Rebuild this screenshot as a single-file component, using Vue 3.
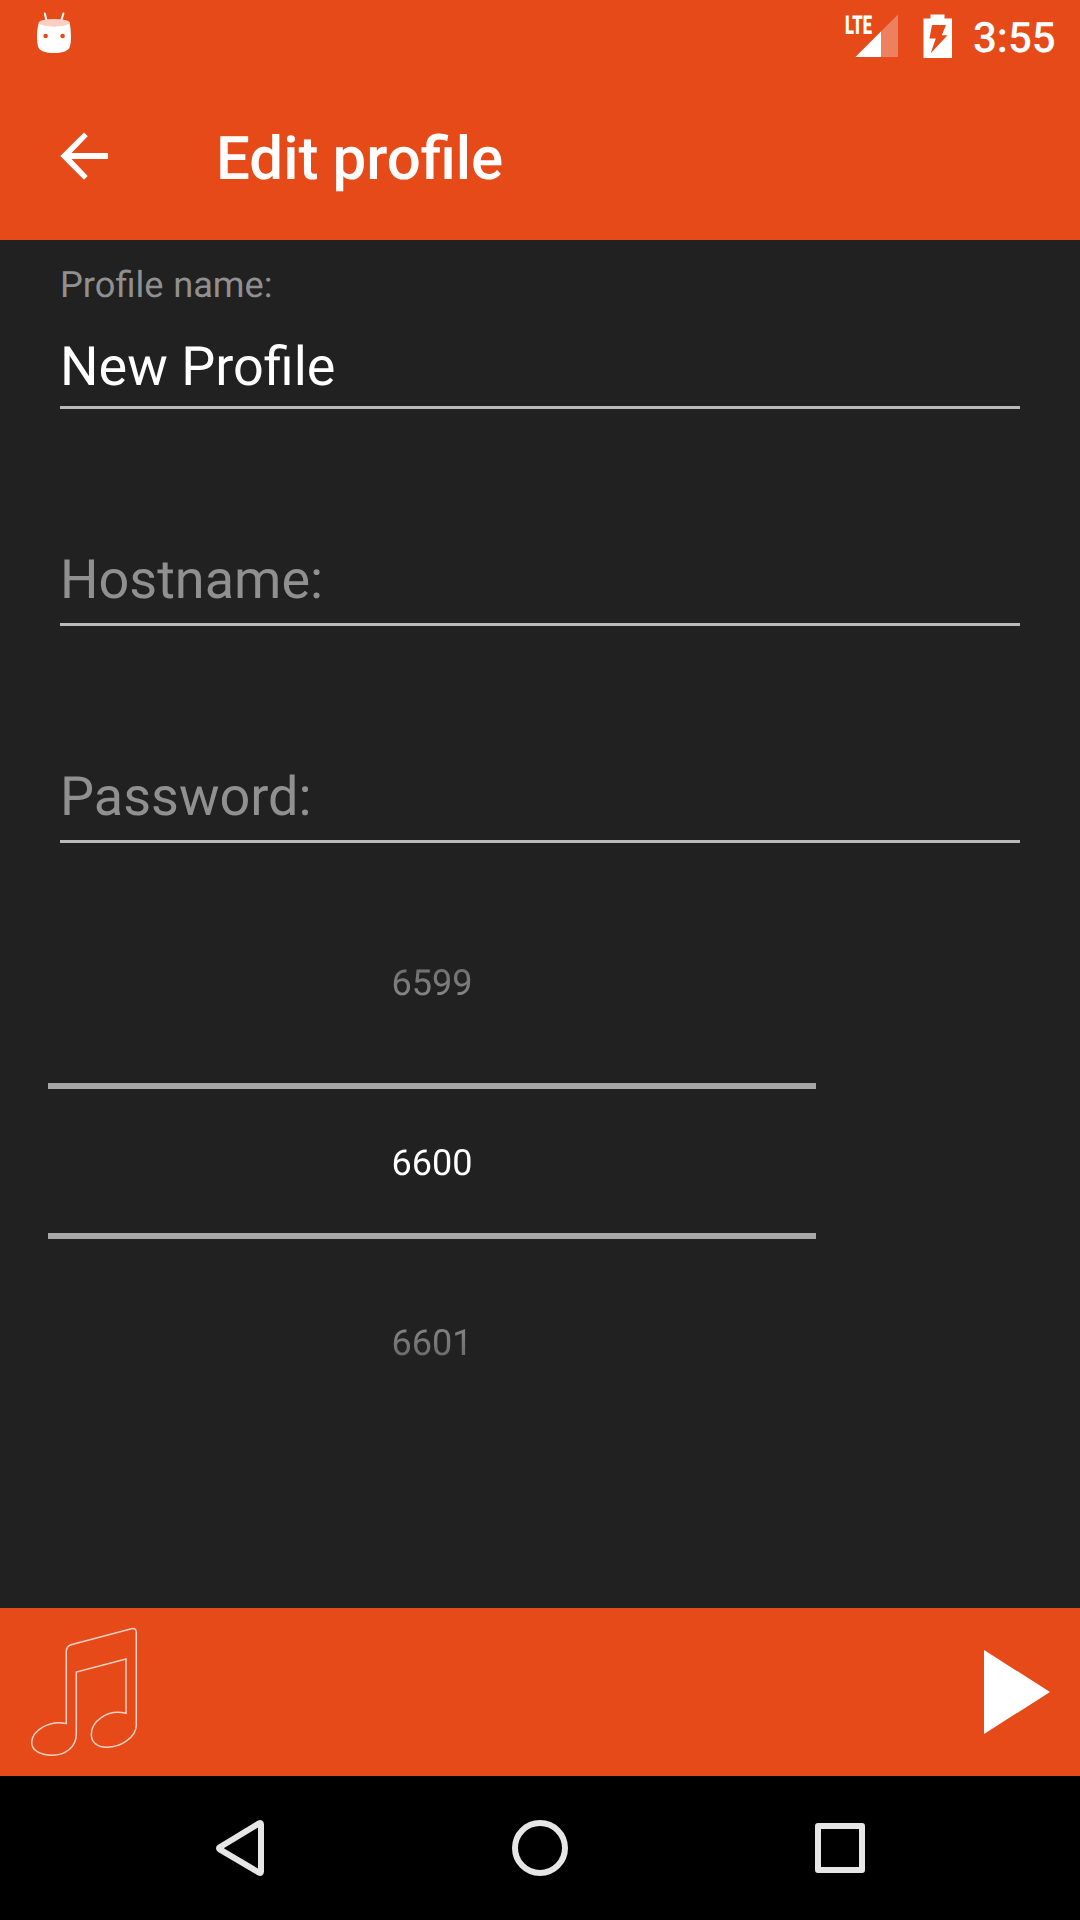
<script setup>
const ports = { previous: 6599, current: 6600, next: 6601 }
</script>

<template>
  <div class="screen">
    <header class="status">
      <svg class="robot" width="40" height="42" viewBox="34 12 40 42">
        <path d="M44.8 13.5L46.6 21M63.4 13.5L61.2 21" stroke="#fff" stroke-width="2" stroke-linecap="round" />
        <path d="M39 22C45 27.5 64 27.5 69.5 22Q71 29 71 37Q71 44 69.5 47.5C67.500 51.500 62 53 54 53C46 53 40.500 51.500 38.500 47.500Q37 44 37 37Q37 28 39 22Z" fill="#fff" />
        <ellipse cx="54.2" cy="22.800" rx="15.400" ry="3.800" fill="#fbcfc1" />
        <circle cx="45.600" cy="36" r="2.300" fill="#e64a19" />
        <circle cx="62.600" cy="36" r="2.300" fill="#e64a19" />
      </svg>
      <div class="spacer"></div>
      <svg class="signal" width="64" height="60" viewBox="836 0 64 60">
        <text x="844.900" y="33.700" class="lte" textLength="27" lengthAdjust="spacingAndGlyphs">LTE</text>
        <path d="M898 14.500V57H855.500Z" fill="#fff" fill-opacity=".3" />
        <path d="M881 31.500V57H855.500Z" fill="#fff" />
      </svg>
      <svg class="battery" width="30" height="45" viewBox="0 0 30 45">
        <path fill-rule="evenodd" fill="#fff" d="M.500 4.500H7.500V.500H21.500V4.500H29V44H.500ZM9 11H23L18.800 21.200H24.500L7.500 39.500L12.800 24.500H6.500Z" />
      </svg>
      <span class="time">3:55</span>
    </header>

    <div class="toolbar">
      <svg width="48" height="48" viewBox="0 0 48 48">
        <path d="M48 21H11.500L27.700 4.200L24 .500L.300 24L24 47.700L27.700 44L11.500 27H48Z" fill="#fff" />
      </svg>
      <h1>Edit profile</h1>
    </div>

    <main>
      <div class="field named">
        <label>Profile name:</label>
        <div class="value">New Profile</div>
      </div>
      <div class="field"><div class="value hint">Hostname:</div></div>
      <div class="field"><div class="value hint">Password:</div></div>

      <div class="picker">
        <div class="above">{{ ports.previous }}</div>
        <div class="selected">{{ ports.current }}</div>
        <div class="below">{{ ports.next }}</div>
      </div>
    </main>

    <footer class="player">
      <svg class="note" width="110" height="132" viewBox="30 1626 110 132">
        <path d="M66.300 1723.500V1651.500Q66.300 1646.500 71 1644.800L131.500 1628.700Q136.300 1627.800 136.300 1632.500V1725C136.300 1737 121 1747.300 107 1747.300C97.500 1747.300 91.300 1742.500 91.300 1734.500C91.300 1722 107 1708.500 126 1713.300V1659L76.300 1672V1734C76.300 1747 65.500 1755.300 52 1755.300C39.500 1755.300 31.700 1750 31.700 1742.500C31.700 1731.500 48.500 1719.500 66.300 1723.500Z" fill="none" stroke="#fff" stroke-opacity=".75" stroke-width="1.500" />
      </svg>
      <svg class="play" width="66" height="84" viewBox="0 0 66 84">
        <path d="M0 0L66 42L0 84Z" fill="#fff" />
      </svg>
    </footer>

    <nav>
      <svg width="144" height="144" viewBox="0 0 144 144">
        <path d="M51.700 71.300L91 47.400Q93 46.500 93 48.500V95.500Q93 97.500 91 96.600L51.700 73.300Q50.300 72.300 51.700 71.300Z" class="outline" />
      </svg>
      <svg width="144" height="144" viewBox="0 0 144 144">
        <circle cx="72" cy="72" r="25" class="outline" />
      </svg>
      <svg width="144" height="144" viewBox="0 0 144 144">
        <rect x="50" y="50" width="44" height="44" class="outline" />
      </svg>
    </nav>
  </div>
</template>

<style>
body {
  margin: 0;
}
</style>

<style scoped>
.screen {
  width: 1080px;
  height: 1920px;
  display: flex;
  flex-direction: column;
  background: #212121;
  color: #fff;
  font-family: Roboto, sans-serif;
  text-rendering: geometricPrecision;
  overflow: hidden;
}
svg {
  display: block;
  flex: none;
}
.status {
  height: 72px;
  flex: none;
  box-sizing: border-box;
  padding: 0 24px 0 34px;
  display: flex;
  align-items: flex-start;
  background: #e64a19;
}
.robot {
  margin-top: 12px;
}
.spacer {
  flex: 1;
}
.lte {
  font: 900 26px Roboto, sans-serif;
  fill: #fff;
}
.battery {
  margin: 14px 0 0 23px;
}
.time {
  width: 83px;
  margin: 14px 0 0 20px;
  font-size: 42px;
  font-weight: 500;
  line-height: 50px;
}
.toolbar {
  height: 168px;
  flex: none;
  box-sizing: border-box;
  display: flex;
  align-items: center;
  padding-left: 60px;
  background: #e64a19;
}
h1 {
  margin: 5px 0 0 108px;
  font-size: 60px;
  font-weight: 500;
  line-height: 72px;
  word-spacing: -0.8px;
}
main {
  flex: 1;
}
.field {
  height: 217px;
  margin: 0 60px;
  box-sizing: border-box;
  border-bottom: 3px solid #bababa;
  display: flex;
  flex-direction: column;
  justify-content: flex-end;
}
.field.named {
  height: 169px;
}
label {
  margin-bottom: 30px;
  font-size: 36.2px;
  line-height: 42px;
  word-spacing: 0.8px;
  color: #909090;
}
.value {
  padding-bottom: 6px;
  font-size: 54px;
  line-height: 64px;
}
.hint {
  padding-bottom: 10px;
  color: #909090;
}
.picker {
  width: 768px;
  height: 540px;
  margin: 50px 0 0 48px;
  font-size: 36px;
  line-height: 42px;
  text-align: center;
  mask-image: linear-gradient(rgba(0, 0, 0, 0.08), #000 252px, #000 288px, rgba(0, 0, 0, 0.05));
}
.above {
  height: 121px;
  padding-top: 69px;
}
.selected {
  height: 91px;
  padding-top: 53px;
  border: solid #cbcbcb;
  border-width: 6px 0;
}
.below {
  padding-top: 83px;
}
.player {
  height: 168px;
  flex: none;
  box-sizing: border-box;
  padding: 0 30px;
  display: flex;
  align-items: center;
  justify-content: space-between;
  background: #e64a19;
}
nav {
  height: 144px;
  flex: none;
  display: flex;
  justify-content: center;
  gap: 156px;
  background: #000;
}
.outline {
  fill: none;
  stroke: #e6e6e6;
  stroke-width: 6;
  stroke-linejoin: round;
}
</style>
